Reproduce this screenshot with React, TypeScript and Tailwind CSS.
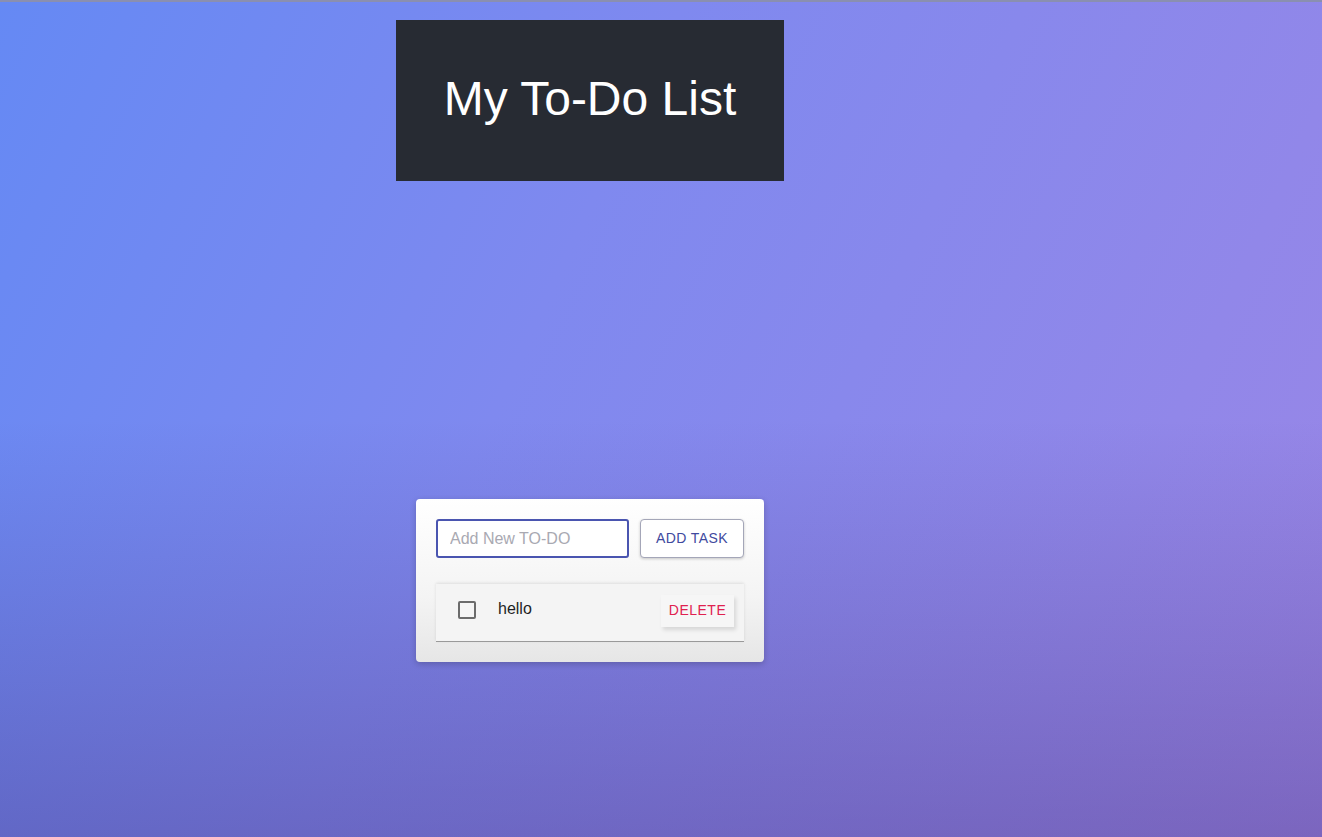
import { useState } from "react";

type Todo = { id: number; text: string; done: boolean };

const App = () => {
  const [todos, setTodos] = useState<Todo[]>([{ id: 1, text: "hello", done: false }]);
  const [input, setInput] = useState<string>("");

  const addTask = () => {
    if (!input.trim()) return;
    setTodos([...todos, { id: Date.now(), text: input, done: false }]);
    setInput("");
  };

  return (
    <div className="min-h-screen w-full bg-[linear-gradient(180deg,rgba(0,0,0,0)_50%,rgba(60,35,110,0.33)_100%),linear-gradient(115deg,#6589f4_0%,#7f89ef_40%,#9a86e6_100%)] font-['Liberation_Sans',Arial,sans-serif] border-t-2 border-[#8a8fb0]">
      <div className="w-[1180px] flex flex-col items-center pt-[18px]">
        {/* 제목 */}
        <div className="w-[388px] h-[161px] bg-[#272b33] flex items-center justify-center">
          <h1 className="text-white text-[48px] leading-none pb-1">My To-Do List</h1>
        </div>

        {/* 입력 카드 */}
        <div className="mt-[318px] w-[348px] rounded bg-[linear-gradient(180deg,#ffffff_0%,#f4f4f4_60%,#e6e6e6_100%)] shadow-[0_2px_6px_rgba(0,0,0,0.2)] px-5 pt-5 pb-5">
          <div className="flex gap-[11px]">
            <input
              value={input}
              onChange={e => setInput(e.target.value)}
              placeholder="Add New TO-DO"
              className="w-[193px] h-[39px] border-2 border-[#4a55b0] rounded-[3px] px-3 text-[16px] text-gray-800 placeholder:text-[#a9a9b2] outline-none bg-white"
            />
            <button
              onClick={addTask}
              className="w-[104px] h-[39px] border border-[#a4a6b8] rounded bg-white shadow-[0_1px_3px_rgba(0,0,0,0.2)] text-[14px] tracking-[0.4px] text-[#3f4a9e] cursor-pointer"
            >
              ADD TASK
            </button>
          </div>

          {/* 할 일 목록 */}
          <div className="mt-[26px]">
            {todos.map(todo => (
              <div
                key={todo.id}
                className="h-[58px] flex items-center pb-[6px] pl-[22px] pr-[10px] bg-[#f4f4f4] border-b border-[#9a9a9a] shadow-[0_-1px_3px_rgba(0,0,0,0.1)]"
              >
                <button
                  onClick={() => setTodos(todos.map(t => (t.id === todo.id ? { ...t, done: !t.done } : t)))}
                  className="w-[18px] h-[18px] border-2 border-[#6b6b6b] rounded-[2px] bg-transparent"
                />
                <span className="ml-[22px] text-[16px] text-[#1f1f1f] -mt-[2px]">{todo.text}</span>
                <button
                  onClick={() => setTodos(todos.filter(t => t.id !== todo.id))}
                  className="ml-auto w-[73px] h-[32px] mt-[2px] bg-[#f6f6f6] shadow-[2px_3px_4px_rgba(0,0,0,0.12)] text-[14px] tracking-[0.5px] text-[#e0214f]"
                >
                  DELETE
                </button>
              </div>
            ))}
          </div>
        </div>
      </div>
    </div>
  );
};

export default App;
